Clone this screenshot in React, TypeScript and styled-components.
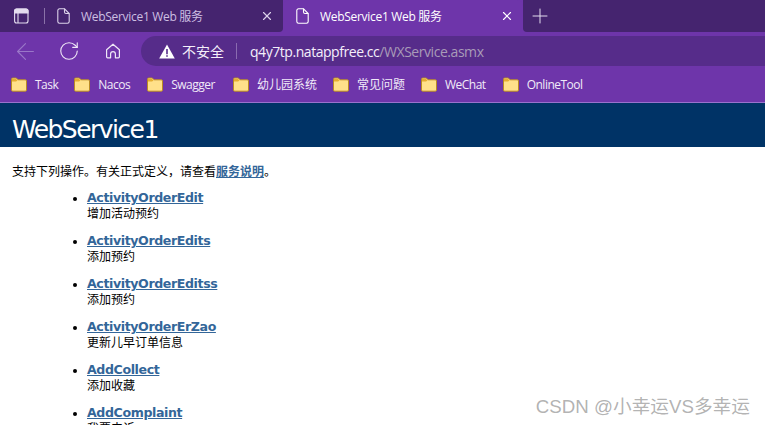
import styled, { createGlobalStyle } from "styled-components";
import { ArrowLeft, RotateCw, X, Plus } from "lucide-react";

const GlobalStyle = createGlobalStyle`
  html, body {
    margin: 0;
    padding: 0;
    height: 425px;
    overflow: hidden;
    background: #fff;
  }
`;

const uiFont = `"Open Sans", "Noto Sans", "Noto Sans CJK SC", sans-serif`;
const cjk = `"Noto Sans CJK SC", sans-serif`;

const Page = styled.div`
  position: relative;
  width: 765px;
  height: 425px;
  overflow: hidden;
  font-family: ${uiFont};
`;

const TabStrip = styled.div`
  display: flex;
  height: 32px;
  background: #6e35aa;
`;

const StripStart = styled.div`
  display: flex;
  align-items: center;
  width: 283px;
  background: #45246f;
  border-bottom-right-radius: 4px;
`;

const StripEnd = styled.div`
  flex: 1;
  display: flex;
  align-items: center;
  padding-left: 5px;
  background: #45246f;
  border-bottom-left-radius: 4px;
  color: #e4dcef;
`;

const WindowIcon = styled.div`
  display: flex;
  width: 45px;
  padding-left: 14px;
  box-sizing: border-box;
  height: 16px;
  border-right: 1px solid #8a72a8;
`;

const Tab = styled.div<{ $active?: boolean }>`
  display: flex;
  align-items: center;
  box-sizing: border-box;
  height: 32px;
  color: ${(p) => (p.$active ? "#fff" : "#cdbfe2")};
  background: ${(p) => (p.$active ? "#6e35aa" : "transparent")};
  width: ${(p) => (p.$active ? "240px" : "238px")};
  padding-left: ${(p) => (p.$active ? "13px" : "12px")};
  padding-right: 9px;
  border-radius: ${(p) => (p.$active ? "6px 6px 0 0" : "0")};
`;

const TabTitle = styled.span`
  flex: 1;
  margin-left: 11px;
  font-size: 12px;
  letter-spacing: -0.3px;
  font-family: ${uiFont};
  white-space: nowrap;
`;

const Toolbar = styled.div`
  display: flex;
  align-items: center;
  height: 34px;
  padding-top: 4px;
  padding-left: 3px;
  box-sizing: border-box;
  background: #6e35aa;
`;

const NavButton = styled.div<{ $dim?: boolean }>`
  display: flex;
  align-items: center;
  justify-content: center;
  width: 44px;
  color: ${(p) => (p.$dim ? "#9a77c8" : "#efe8f7")};
`;

const AddressBar = styled.div`
  flex: 1;
  display: flex;
  align-items: center;
  height: 30px;
  margin-left: 6px;
  padding-left: 18px;
  border-radius: 15px 0 0 15px;
  background: #562c8a;
`;

const Warning = styled.span`
  display: flex;
  margin-right: 7px;
`;

const SecurityLabel = styled.span`
  font-size: 14px;
  font-family: ${cjk};
  color: #f4effa;
`;

const Divider = styled.span`
  width: 1px;
  height: 16px;
  margin: 0 13px 0 12px;
  background: #8a6bb0;
`;

const Host = styled.span`
  font-size: 14px;
  letter-spacing: -0.45px;
  color: #f4effa;
`;

const UrlPath = styled.span`
  font-size: 14px;
  letter-spacing: -0.45px;
  color: #a89bb8;
`;

const Bookmarks = styled.div`
  display: flex;
  align-items: center;
  height: 36px;
  padding-left: 11px;
  background: #6e35aa;
  border-bottom: 1px solid #9a72cc;
  box-sizing: content-box;
`;

const Bookmark = styled.div<{ $gap: number }>`
  display: flex;
  align-items: center;
  margin-right: ${(p) => p.$gap}px;
  font-size: 12px;
  color: #f1eaf8;
  white-space: nowrap;
`;

const BookmarkLabel = styled.span<{ $latin: boolean }>`
  margin-left: 8px;
  font-family: ${uiFont};
  letter-spacing: ${(p) => (p.$latin ? "-0.5px" : "0")};
`;

const Banner = styled.div`
  height: 44px;
  padding-left: 12px;
  background: #003366;
  color: #fff;
  font-family: "DejaVu Sans", sans-serif;
  font-size: 25px;
  line-height: 54px;
  letter-spacing: -1.55px;
  overflow: hidden;
`;

const Content = styled.div`
  padding-left: 12px;
  font-family: "DejaVu Sans", ${cjk};
  font-size: 12px;
  color: #000;
`;

const Intro = styled.p`
  margin: 16px 0 0;
  height: 18px;
  line-height: 18px;
`;

const Link = styled.a`
  color: #336699;
  font-weight: bold;
  text-decoration: underline;
`;

const Operations = styled.ul`
  margin: 9px 0 0;
  padding: 0 0 0 75px;
`;

const Operation = styled.li`
  height: 43px;
  line-height: 16px;
`;

const OperationLink = styled(Link)`
  display: block;
  font-size: 12.6px;
  letter-spacing: -0.4px;
`;

const Watermark = styled.div`
  position: absolute;
  right: 15px;
  top: 396px;
  font-family: "Liberation Sans", ${cjk};
  font-size: 18.7px;
  line-height: 22px;
  color: rgba(130, 130, 130, 0.62);
`;

function WindowGlyph() {
  return (
    <svg width="15" height="16" viewBox="0 0 15 16" fill="none" stroke="#e4dcef" strokeWidth="1.1">
      <rect x=".6" y="1" width="13.4" height="14" rx="2" />
      <path d="M.6 3a2 2 0 0 1 2-2h9.4a2 2 0 0 1 2 2v2H.6z" fill="#e4dcef" />
      <path d="M4 5v10" />
    </svg>
  );
}

function HomeGlyph() {
  return (
    <svg width="16" height="16" viewBox="0 0 16 16" fill="none" stroke="#efe8f7" strokeWidth="1.2" strokeLinejoin="round">
      <path d="M8 1.2 1.6 6.8v7a1 1 0 0 0 1 1h3V11a2.4 2.4 0 0 1 4.8 0v3.8h3a1 1 0 0 0 1-1v-7z" />
    </svg>
  );
}

function PageGlyph({ color }: { color: string }) {
  return (
    <svg width="13" height="16" viewBox="0 0 13 16" fill="none" stroke={color} strokeWidth="1.1">
      <path d="M2.5 .8h5l4.7 4.7v8a1.7 1.7 0 0 1-1.7 1.7h-8A1.7 1.7 0 0 1 .8 13.5V2.5A1.7 1.7 0 0 1 2.5 .8z" />
      <path d="M7.5 .8v3.2a1.5 1.5 0 0 0 1.5 1.5h3.2" />
    </svg>
  );
}

function FolderGlyph() {
  return (
    <svg width="16" height="15" viewBox="0 0 16 15">
      <path d="M.5 2.2A1.2 1.2 0 0 1 1.7 1h3.6l1.8 1.8h7.2A1.2 1.2 0 0 1 15.5 4v9a1.2 1.2 0 0 1-1.2 1.2H1.7A1.2 1.2 0 0 1 .5 13z" fill="#ffe08a" stroke="#b98a24" />
      <path d="M1 2h4l1.6 1.4L5 4.6H1z" fill="#e6ad30" />
    </svg>
  );
}

function WarningGlyph() {
  return (
    <svg width="16" height="15" viewBox="0 0 16 15">
      <path d="M8 .5 15.8 14.5H.2z" fill="#fff" />
      <path d="M7.2 5h1.6v5.2H7.2zM7.2 11.2h1.6v1.6H7.2z" fill="#562c8a" />
    </svg>
  );
}

const bookmarks = [
  { label: "Task", gap: 16, latin: true },
  { label: "Nacos", gap: 17, latin: true },
  { label: "Swagger", gap: 18, latin: true },
  { label: "幼儿园系统", gap: 16, latin: false },
  { label: "常见问题", gap: 16, latin: false },
  { label: "WeChat", gap: 17, latin: true },
  { label: "OnlineTool", gap: 0, latin: true },
];

const operations = [
  { name: "ActivityOrderEdit", desc: "增加活动预约" },
  { name: "ActivityOrderEdits", desc: "添加预约" },
  { name: "ActivityOrderEditss", desc: "添加预约" },
  { name: "ActivityOrderErZao", desc: "更新儿早订单信息" },
  { name: "AddCollect", desc: "添加收藏" },
  { name: "AddComplaint", desc: "我要申诉" },
];

export default function App() {
  return (
    <Page>
      <GlobalStyle />
      <TabStrip>
        <StripStart>
          <WindowIcon>
            <WindowGlyph />
          </WindowIcon>
          <Tab>
            <PageGlyph color="#dcd2ea" />
            <TabTitle>WebService1 Web 服务</TabTitle>
            <X size={14} color="#dcd2ea" />
          </Tab>
        </StripStart>
        <Tab $active>
          <PageGlyph color="#fff" />
          <TabTitle>WebService1 Web 服务</TabTitle>
          <X size={14} color="#fff" />
        </Tab>
        <StripEnd>
          <Plus size={24} strokeWidth={1} />
        </StripEnd>
      </TabStrip>
      <Toolbar>
        <NavButton $dim>
          <ArrowLeft size={27} strokeWidth={1} />
        </NavButton>
        <NavButton>
          <RotateCw size={22} strokeWidth={1.2} />
        </NavButton>
        <NavButton>
          <HomeGlyph />
        </NavButton>
        <AddressBar>
          <Warning>
            <WarningGlyph />
          </Warning>
          <SecurityLabel>不安全</SecurityLabel>
          <Divider />
          <Host>q4y7tp.natappfree.cc</Host>
          <UrlPath>/WXService.asmx</UrlPath>
        </AddressBar>
      </Toolbar>
      <Bookmarks>
        {bookmarks.map((b) => (
          <Bookmark key={b.label} $gap={b.gap}>
            <FolderGlyph />
            <BookmarkLabel $latin={b.latin}>{b.label}</BookmarkLabel>
          </Bookmark>
        ))}
      </Bookmarks>
      <Banner>WebService1</Banner>
      <Content>
        <Intro>
          支持下列操作。有关正式定义，请查看<Link>服务说明</Link>。
        </Intro>
        <Operations>
          {operations.map((op) => (
            <Operation key={op.name}>
              <OperationLink>{op.name}</OperationLink>
              {op.desc}
            </Operation>
          ))}
        </Operations>
      </Content>
      <Watermark>CSDN @小幸运VS多幸运</Watermark>
    </Page>
  );
}
